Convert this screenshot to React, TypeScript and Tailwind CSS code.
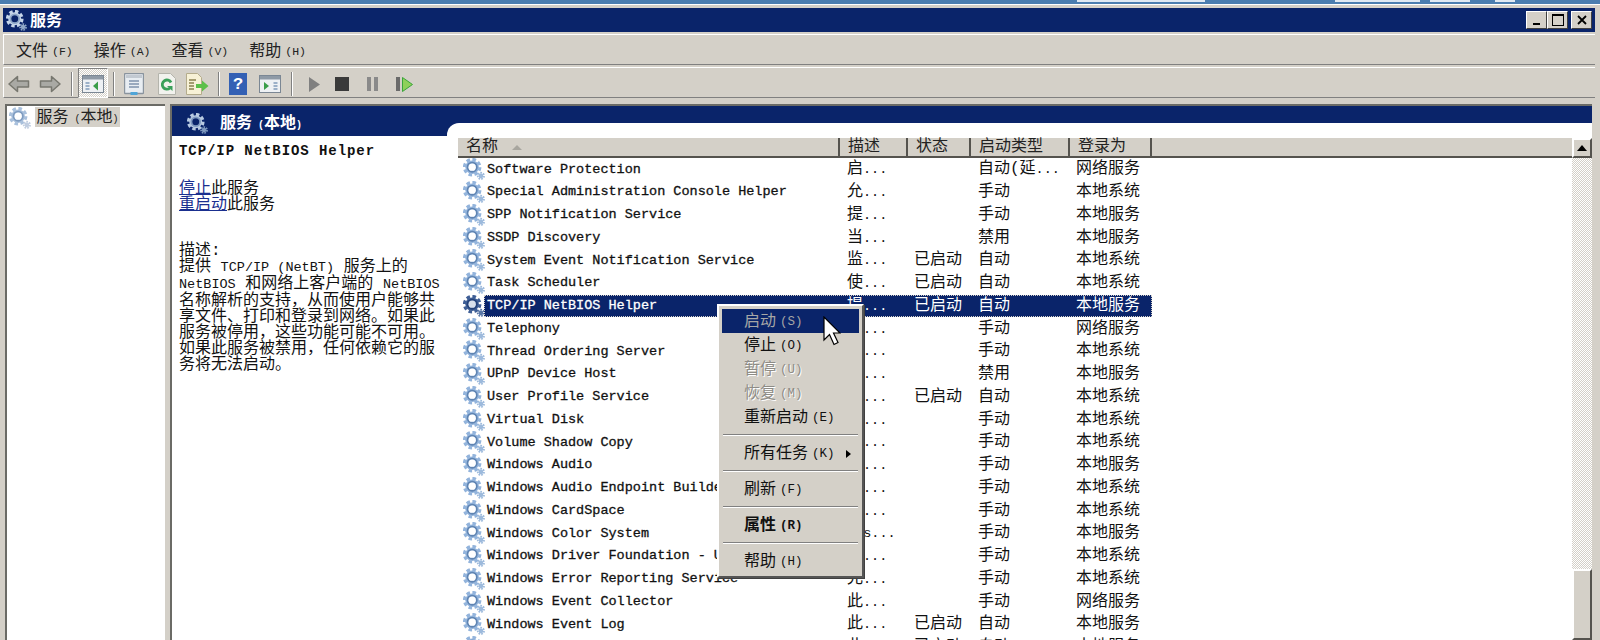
import React from "react";

const rows: [string, string, string, string, string][] = [
  ["Software Protection", "启", "", "自动(延...", "网络服务"],
  ["Special Administration Console Helper", "允", "", "手动", "本地系统"],
  ["SPP Notification Service", "提", "", "手动", "本地服务"],
  ["SSDP Discovery", "当", "", "禁用", "本地服务"],
  ["System Event Notification Service", "监", "已启动", "自动", "本地系统"],
  ["Task Scheduler", "使", "已启动", "自动", "本地系统"],
  ["TCP/IP NetBIOS Helper", "提", "已启动", "自动", "本地服务"],
  ["Telephony", "提", "", "手动", "网络服务"],
  ["Thread Ordering Server", "提", "", "手动", "本地系统"],
  ["UPnP Device Host", "允", "", "禁用", "本地服务"],
  ["User Profile Service", "此", "已启动", "自动", "本地系统"],
  ["Virtual Disk", "提", "", "手动", "本地系统"],
  ["Volume Shadow Copy", "管", "", "手动", "本地系统"],
  ["Windows Audio", "管", "", "手动", "本地服务"],
  ["Windows Audio Endpoint Builder", "管", "", "手动", "本地系统"],
  ["Windows CardSpace", "安", "", "手动", "本地系统"],
  ["Windows Color System", "Wcs", "", "手动", "本地服务"],
  ["Windows Driver Foundation - User-mode Driver Framework", "管", "", "手动", "本地系统"],
  ["Windows Error Reporting Service", "允", "", "手动", "本地系统"],
  ["Windows Event Collector", "此", "", "手动", "网络服务"],
  ["Windows Event Log", "此", "已启动", "自动", "本地服务"],
  ["Windows Firewall", "此", "已启动", "自动", "本地服务"],
];

function Gear({ size = 22, main = "#93b4dc", ring = "#5f84b2", hole = "#ffffff", small = "#9dbadc" }: { size?: number; main?: string; ring?: string; hole?: string; small?: string }) {
  return (
    <svg width={size} height={size} viewBox="0 0 24 24" className="shrink-0">
      <circle cx="10" cy="10" r="8.4" fill="none" stroke={main} strokeWidth="3.4" strokeDasharray="3.9 2.7" />
      <circle cx="10" cy="10" r="7.4" fill={main} />
      <circle cx="10" cy="10" r="5" fill="none" stroke={ring} strokeWidth="2" />
      <circle cx="10" cy="10" r="4" fill={hole} />
      <circle cx="19.5" cy="19.5" r="3.4" fill="none" stroke={small} strokeWidth="2" strokeDasharray="1.8 1.2" />
      <circle cx="19.5" cy="19.5" r="2.6" fill={small} />
    </svg>
  );
}

function MenuLabel({ text, hot }: { text: string; hot: string }) {
  return (
    <span className="flex items-center gap-[4px] text-[16px] leading-none text-[#222]">
      {text}
      <span className="text-[11.5px]">({hot})</span>
    </span>
  );
}

// CJK label with the narrow bitmap-style brackets of the original
function Local() {
  return (
    <span>
      服务<span className="text-[10px]"> (</span>本地<span className="text-[10px]">)</span>
    </span>
  );
}

function ToolSep() {
  return <div className="h-[24px] w-[2px] border-l border-[#808080] bg-white" />;
}

function ToolIcon({ w, ml, children }: { w: number; ml: number; children: React.ReactNode }) {
  return (
    <div className="flex items-center justify-center" style={{ width: w, marginLeft: ml }}>
      {children}
    </div>
  );
}

function Toolbar() {
  return (
    <div className="flex h-[31px] items-center border-y border-t-white border-b-[#808080] border-l border-l-white pt-[3px]">
      <ToolIcon w={22} ml={4}>
        <svg width="22" height="18" viewBox="0 0 22 18"><path d="M1 9 9.5 1.5V6h11v6h-11v4.5z" fill="#a9a9a4" stroke="#77776f" strokeWidth="1.5" strokeLinejoin="round" /></svg>
      </ToolIcon>
      <ToolIcon w={22} ml={9}>
        <svg width="22" height="18" viewBox="0 0 22 18"><path d="M21 9 12.5 1.5V6h-11v6h11v4.5z" fill="#a9a9a4" stroke="#77776f" strokeWidth="1.5" strokeLinejoin="round" /></svg>
      </ToolIcon>
      <div className="ml-[10px]"><ToolSep /></div>
      <div className="-mt-[3px] ml-[5px] flex h-[30px] w-[30px] items-center justify-center border border-t-[#808080] border-l-[#808080] border-r-white border-b-white bg-[repeating-conic-gradient(#d4d0c8_0_25%,#ffffff_0_50%)] bg-[length:2px_2px]">
        <svg width="22" height="18" viewBox="0 0 22 18" className="mt-[3px]">
          <rect x=".5" y=".5" width="21" height="17" fill="#eef1f4" stroke="#7b8794" />
          <rect x="1" y="1" width="20" height="3.5" fill="#8f9aa6" />
          <path d="M3.5 7h4v2h-4zM3.5 10h4v2h-4zM3.5 13h4v2h-4z" fill="#9bb0c8" />
          <path d="M16 6.5v9l-5-4.5z" fill="#3a9e4a" />
        </svg>
      </div>
      <div className="ml-[5px]"><ToolSep /></div>
      <ToolIcon w={20} ml={9}>
        <svg width="20" height="22" viewBox="0 0 20 22">
          <rect x=".5" y=".5" width="19" height="20" rx="1" fill="#e8edf2" stroke="#8a949e" strokeWidth="1.4" />
          <rect x="2" y="2" width="16" height="3" fill="#c2c9d1" />
          <path d="M5 8h10M5 11h10M5 14h10" stroke="#7f93ad" strokeWidth="1.4" />
          <rect x="6.5" y="19" width="7" height="3" fill="#4fa5d8" />
        </svg>
      </ToolIcon>
      <ToolIcon w={18} ml={14}>
        <svg width="18" height="22" viewBox="0 0 18 22">
          <path d="M.5.5h12l5 5v16H.5z" fill="#f2f2ee" stroke="#b4b4ac" />
          <path d="M13 9.5A4.6 4.6 0 1 0 12 15" fill="none" stroke="#3aa05a" strokeWidth="2.8" />
          <path d="M9 13h5.5v5z" fill="#3aa05a" />
        </svg>
      </ToolIcon>
      <ToolIcon w={23} ml={10}>
        <svg width="23" height="22" viewBox="0 0 23 22">
          <path d="M.5.5h11l4 4v17H.5z" fill="#f7f1d6" stroke="#b4ac8c" />
          <path d="M3 7h7M3 10h5M3 13h5M3 16h5" stroke="#8a8050" strokeWidth="1.3" />
          <path d="M10 11h6V7.5l6.5 5.5-6.5 5.5V15h-6z" fill="#5cc04a" />
        </svg>
      </ToolIcon>
      <div className="ml-[9px]"><ToolSep /></div>
      <ToolIcon w={18} ml={9}>
        <div className="flex h-[22px] w-[18px] items-center justify-center bg-[#3360b4] text-[17px] leading-none font-bold text-white">?</div>
      </ToolIcon>
      <ToolIcon w={22} ml={12}>
        <svg width="22" height="18" viewBox="0 0 22 18">
          <rect x=".5" y=".5" width="21" height="17" fill="#eef1f4" stroke="#7b8794" />
          <rect x="1" y="1" width="20" height="3.5" fill="#8f9aa6" />
          <path d="M5 7v8l5-4z" fill="#3a9e4a" />
          <path d="M14.5 7h4v2h-4zM14.5 10h4v2h-4zM14.5 13h4v2h-4z" fill="#9bb0c8" />
        </svg>
      </ToolIcon>
      <div className="ml-[10px]"><ToolSep /></div>
      <ToolIcon w={11} ml={16}>
        <svg width="11" height="15" viewBox="0 0 11 15"><path d="M0 0 11 7.5 0 15z" fill="#808080" /></svg>
      </ToolIcon>
      <div className="ml-[15px] h-[14px] w-[14px] bg-[#3a3a3a]" />
      <div className="ml-[18px] flex gap-[3px]">
        <div className="h-[14px] w-[4px] bg-[#8a8a8a]" />
        <div className="h-[14px] w-[4px] bg-[#8a8a8a]" />
      </div>
      <div className="ml-[18px] flex items-center gap-[2px]">
        <div className="h-[14px] w-[4px] bg-[#6a6a6a]" />
        <svg width="11" height="15" viewBox="0 0 11 15"><path d="M.5 .5 10.5 7.5 .5 14.5z" fill="#8fd05a" stroke="#3aa53a" /></svg>
      </div>
    </div>
  );
}

function TitleButton({ children, className }: { children: React.ReactNode; className?: string }) {
  return (
    <div className={"flex h-[18px] w-[21px] items-center justify-center border border-t-white border-l-white border-r-[#404040] border-b-[#404040] bg-[#d4d0c8] " + (className ?? "")}>
      {children}
    </div>
  );
}

function Dots() {
  return <span className="text-[13.5px]">...</span>;
}

function Row({ data, selected }: { data: [string, string, string, string, string]; selected: boolean }) {
  const [name, desc, status, start, logon] = data;
  const isWcs = desc === "Wcs";
  const startText = start.endsWith("...") ? start.slice(0, -3) : start;
  return (
    <div className="flex h-[22.75px] shrink-0 items-center">
      <div className="flex w-[26px] justify-start pl-[5px]">
        {selected ? <Gear main="#3f5f96" ring="#24427a" small="#5a78a8" hole="#d8e0ec" /> : <Gear />}
      </div>
      <div className={"grid h-full flex-none grid-cols-[355px_67px_63px_99px_84px] items-center leading-none " + (selected ? "bg-[#0a246a] text-white outline-1 outline-dotted outline-offset-[-1px] outline-[#d4d0c8]" : "text-[#111]")}>
        <div className="truncate pl-[3px] text-[13.5px] [-webkit-text-stroke:0.3px]">{name}</div>
        <div className="pl-[8px] text-[16px]">
          {isWcs ? <span className="text-[13.5px]">Wcs</span> : desc}
          <Dots />
        </div>
        <div className="pl-[8px] text-[16px]">{status}</div>
        <div className="pl-[9px] text-[16px] whitespace-nowrap">
          {startText}
          {start !== startText && <Dots />}
        </div>
        <div className="pl-[8px] text-[16px]">{logon}</div>
      </div>
    </div>
  );
}

function HeaderCell({ w, children }: { w: number; children: React.ReactNode }) {
  return (
    <div className="flex h-full items-center border-r-2 border-r-[#55534e] pl-[8px] text-[16px] leading-none text-[#222]" style={{ width: w }}>
      {children}
    </div>
  );
}

function ContextItem({ text, hot, state, bold, arrow }: { text: string; hot: string; state?: "active" | "off"; bold?: boolean; arrow?: boolean }) {
  const tone =
    state === "active"
      ? "bg-[#0a246a] text-[#a6a6a6]"
      : state === "off"
        ? "text-[#8e8c86] [text-shadow:1px_1px_0_#fff]"
        : "text-[#111]";
  return (
    <div className={"relative flex h-[24px] items-center gap-[4px] pt-[2px] pl-[22px] text-[16px] leading-none " + tone + (bold ? " font-bold" : "")}>
      {text}
      <span className="text-[12.5px]">({hot})</span>
      {arrow && <span className="absolute right-[8px] h-0 w-0 border-y-[4px] border-l-[5px] border-y-transparent border-l-black" />}
    </div>
  );
}

function ContextSep() {
  return (
    <div className="flex h-[12px] items-center px-[1px]">
      <div className="h-[2px] w-full border-t border-[#808080] bg-white" />
    </div>
  );
}

function ContextMenu() {
  return (
    <div className="absolute top-[304px] left-[717px] w-[147px] border-2 border-t-white border-l-white border-r-[#555] border-b-[#555] bg-[#d4d0c8] p-[3px] shadow-[1px_1px_0_#404040]">
      <ContextItem text="启动" hot="S" state="active" />
      <ContextItem text="停止" hot="O" />
      <ContextItem text="暂停" hot="U" state="off" />
      <ContextItem text="恢复" hot="M" state="off" />
      <ContextItem text="重新启动" hot="E" />
      <ContextSep />
      <ContextItem text="所有任务" hot="K" arrow />
      <ContextSep />
      <ContextItem text="刷新" hot="F" />
      <ContextSep />
      <ContextItem text="属性" hot="R" bold />
      <ContextSep />
      <ContextItem text="帮助" hot="H" />
    </div>
  );
}

export default function App() {
  return (
    <div className="relative flex h-[640px] w-[1600px] flex-col overflow-hidden bg-[#d4d0c8] font-['Liberation_Mono','Noto_Sans_CJK_SC',monospace]">
      {/* desktop peeking out above the window */}
      <div className="flex h-[4px] shrink-0 bg-[#4a7db0]">
        <div className="ml-[1077px] h-[2px] w-[128px] bg-[#dfe8f2]" />
        <div className="ml-[130px] h-[2px] w-[85px] bg-[#dfe8f2]" />
        <div className="ml-[10px] h-[2px] w-[40px] bg-[#dfe8f2]" />
        <div className="ml-[25px] h-[2px] w-[20px] bg-[#dfe8f2]" />
      </div>
      <div className="h-[4px] shrink-0 border-t border-t-white bg-[#d4d0c8]" />

      <div className="flex min-h-0 flex-1 flex-col pr-[5px] pl-[3px]">
        <div className="flex h-[24px] shrink-0 items-center bg-[#0a246a] pr-[3px] pl-[3px]">
          <Gear size={21} main="#c6d6ea" ring="#8fa8c8" hole="#0a246a" small="#8fa8c8" />
          <span className="ml-[3px] pt-[3px] text-[16px] leading-none font-bold text-white">服务</span>
          <div className="ml-auto flex items-center">
            <TitleButton>
              <div className="mt-[8px] h-[2px] w-[7px] bg-black" />
            </TitleButton>
            <TitleButton>
              <div className="h-[12px] w-[12px] border border-t-2 border-black" />
            </TitleButton>
            <TitleButton className="ml-[3px]">
              <svg width="10" height="10" viewBox="0 0 10 10"><path d="M1 1l8 8M9 1l-8 8" stroke="#000" strokeWidth="1.8" /></svg>
            </TitleButton>
          </div>
        </div>

        <div className="mt-[2px] flex h-[31px] shrink-0 items-center gap-[21px] border-y border-t-white border-b-[#808080] border-l border-l-white pt-[5px] pl-[12px]">
          <MenuLabel text="文件" hot="F" />
          <MenuLabel text="操作" hot="A" />
          <MenuLabel text="查看" hot="V" />
          <MenuLabel text="帮助" hot="H" />
        </div>

        <div className="mt-[2px] shrink-0">
          <Toolbar />
        </div>

        <div className="mt-[6px] flex min-h-0 flex-1 gap-[5px] pr-[3px] pl-[2px]">
          <div className="flex w-[160px] shrink-0 items-start border-t-2 border-l-2 border-[#6b6b66] bg-white pt-[1px] pl-[2px]">
            <Gear main="#a9c0dc" ring="#7f9cc0" small="#c0cde0" />
            <span className="ml-[4px] flex h-[20px] w-[85px] items-center justify-center bg-[#d4d0c8] pt-[1px] text-[16px] leading-none whitespace-pre text-[#222]">
              <Local />
            </span>
          </div>

          <div className="flex min-w-0 flex-1 flex-col border-t-2 border-l-2 border-[#6b6b66] bg-white">
            <div className="h-[17px] shrink-0 bg-[#0a246a]" />
            <div className="flex min-h-0 flex-1">
              <div className="w-[275px] shrink-0 bg-white">
                <div className="relative h-[13px] bg-[#0a246a]">
                  <div className="absolute -top-[10px] left-[15px] flex items-center">
                    <Gear size={21} main="#b9cbe2" ring="#7f9ac0" hole="#0a246a" small="#7f9ac0" />
                    <span className="ml-[12px] pt-[1px] text-[16px] leading-none font-bold whitespace-pre text-white">
                      <Local />
                    </span>
                  </div>
                </div>
                <div className="pl-[7px] leading-none text-[#111]">
                  <div className="mt-[8px] text-[14px] font-bold tracking-[0.93px]">TCP/IP NetBIOS Helper</div>
                  <div className="mt-[24px] text-[16px] leading-[15.5px]">
                    <div><span className="text-[#1a2f8f] underline">停止</span>此服务</div>
                    <div><span className="text-[#1a2f8f] underline">重启动</span>此服务</div>
                  </div>
                  <div className="mt-[30px] text-[16px] leading-[16px] whitespace-nowrap">
                    <div>描述:</div>
                    <div>提供 <span className="text-[13.5px]">TCP/IP (NetBT)</span> 服务上的</div>
                    <div><span className="text-[13.5px]">NetBIOS</span> 和网络上客户端的 <span className="text-[13.5px]">NetBIOS</span></div>
                    <div>名称解析的支持{"\uFF0C"}从而使用户能够共</div>
                    <div>享文件、打印和登录到网络。如果此</div>
                    <div>服务被停用{"\uFF0C"}这些功能可能不可用。</div>
                    <div>如果此服务被禁用{"\uFF0C"}任何依赖它的服</div>
                    <div>务将无法启动。</div>
                  </div>
                </div>
              </div>

              <div className="flex min-w-0 flex-1 bg-[#0a246a]">
                <div className="flex min-w-0 flex-1 flex-col rounded-tl-[12px] bg-white">
                  <div className="h-[15px] shrink-0" />
                  <div className="flex min-h-0 flex-1">
                    <div className="flex min-w-0 flex-1 flex-col pl-[11px]">
                      <div className="flex h-[20px] shrink-0 border-b-2 border-b-[#55534e] bg-[#d4d0c8]">
                        <HeaderCell w={382}>
                          名称
                          <span className="ml-[14px] h-0 w-0 border-x-[5px] border-b-[5px] border-x-transparent border-b-[#a8a69f]" />
                        </HeaderCell>
                        <HeaderCell w={68}>描述</HeaderCell>
                        <HeaderCell w={63}>状态</HeaderCell>
                        <HeaderCell w={99}>启动类型</HeaderCell>
                        <HeaderCell w={82}>登录为</HeaderCell>
                      </div>
                      <div className="flex min-h-0 flex-1 flex-col overflow-hidden">
                        {rows.map((r, i) => (
                          <Row key={r[0]} data={r} selected={i === 6} />
                        ))}
                      </div>
                    </div>

                    <div className="flex w-[20px] shrink-0 flex-col">
                      <div className="flex h-[20px] shrink-0 items-center justify-center border-2 border-t-white border-l-white border-r-[#55534e] border-b-[#55534e] bg-[#d4d0c8]">
                        <span className="h-0 w-0 border-x-[5px] border-b-[6px] border-x-transparent border-b-black" />
                      </div>
                      <div className="flex-1 bg-[repeating-conic-gradient(#d4d0c8_0_25%,#ffffff_0_50%)] bg-[length:2px_2px]" />
                      <div className="h-[71px] shrink-0 border-2 border-t-white border-l-white border-r-[#55534e] border-b-[#55534e] bg-[#d4d0c8]" />
                    </div>
                  </div>
                </div>
              </div>
            </div>
          </div>
        </div>
      </div>

      <ContextMenu />

      <svg width="18" height="30" viewBox="0 0 18 30" className="absolute top-[316px] left-[823px]">
        <path d="M1 1v23l5.5-5.5 4.5 10 4-2-4.5-9.5H17z" fill="#fff" stroke="#000" strokeWidth="1.2" />
      </svg>
    </div>
  );
}
